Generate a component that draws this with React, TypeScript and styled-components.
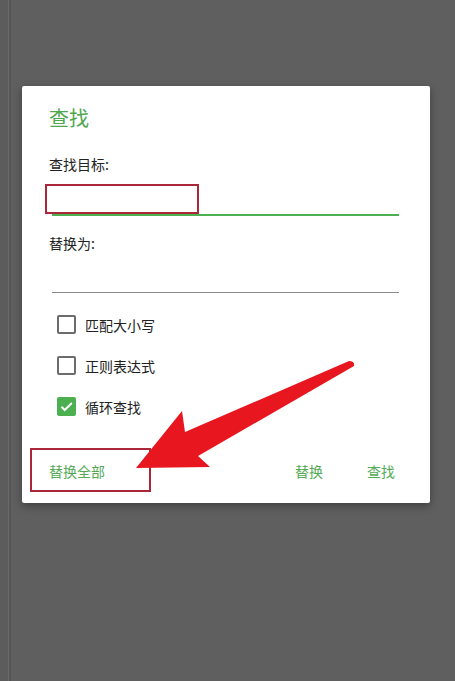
import React, { useState } from 'react'
import styled, { createGlobalStyle } from 'styled-components';

const GlobalStyle = createGlobalStyle`
    html, body {
        margin:0;
        padding:0;
    }
    body {
        background:#5f5f5f;
        font-family:"Noto Sans CJK SC", "Noto Sans", sans-serif;
    }
`;

const Page = styled.div`
    position:relative;
    width:455px;
    height:681px;
    overflow:hidden;
    background:
        linear-gradient(to right, #5c5c5c 0, #5c5c5c 8px, #6a6a6a 8px, #6a6a6a 9px, #565656 9px, #565656 11px, transparent 11px),
        #5f5f5f;
    padding:86px 0 0 22px;
    box-sizing:border-box;
`;

const Dialog = styled.div`
    position:relative;
    width:408px;
    height:417px;
    box-sizing:border-box;
    background:#fff;
    border-radius:2px;
    box-shadow:0 3px 8px rgba(0,0,0,0.35);
    padding:18px 31px 14px 27px;
    display:flex;
    flex-direction:column;
`;

const Title = styled.h2`
    margin:0;
    font-size:20px;
    line-height:28px;
    font-weight:400;
    color:#4fa74f;
`;

const Label = styled.div<{ top: number }>`
    margin-top:${p => p.top}px;
    font-size:14px;
    line-height:20px;
    color:#222;
`;

const Field = styled.input<{ focused?: boolean }>`
    display:block;
    margin-left:3px;
    width:calc(100% - 3px);
    box-sizing:border-box;
    border:none;
    outline:none;
    background:transparent;
    font-size:15px;
    font-family:inherit;
    border-bottom:${p => p.focused ? '2px solid #4caf50' : '1px solid #8a8a8a'};
    height:${p => p.focused ? 42 : 40}px;
`;

const Options = styled.div`
    margin-top:11px;
    display:flex;
    flex-direction:column;
`;

const OptionRow = styled.label`
    display:flex;
    align-items:center;
    height:41px;
    padding-left:8px;
    gap:9px;
    font-size:14px;
    color:#222;
    cursor:pointer;
`;

const Box = styled.span<{ checked: boolean }>`
    width:19px;
    height:19px;
    box-sizing:border-box;
    border-radius:2px;
    border:${p => p.checked ? 'none' : '2px solid #6c6c6c'};
    background:${p => p.checked ? '#4caf50' : '#fff'};
    display:flex;
    align-items:center;
    justify-content:center;
`;

const Actions = styled.div`
    margin-top:26px;
    margin-right:4px;
    height:36px;
    display:flex;
    align-items:center;
`;

const ActionButton = styled.button<{ gap?: number }>`
    border:none;
    background:transparent;
    padding:0;
    margin-left:${p => p.gap ?? 0}px;
    font-family:inherit;
    font-size:14px;
    color:#55a955;
    cursor:pointer;
`;

const Spacer = styled.div`
    flex:1;
`;

const Mark = styled.div<{ x: number; y: number; w: number; h: number }>`
    position:absolute;
    left:${p => p.x}px;
    top:${p => p.y}px;
    width:${p => p.w}px;
    height:${p => p.h}px;
    box-sizing:border-box;
    border:2px solid #a8283a;
    pointer-events:none;
`;

const ArrowLayer = styled.svg`
    position:absolute;
    left:0;
    top:0;
    pointer-events:none;
`;

const options = ['匹配大小写', '正则表达式', '循环查找'];

const App = () => {
    const [checked, setChecked] = useState([false, false, true]);
    const toggle = (i: number) => setChecked(checked.map((c, j) => j === i ? !c : c));
  return (
    <>
    <GlobalStyle />
    <Page>
        <Dialog>
            <Title>查找</Title>
            <Label top={22}>查找目标:</Label>
            <Field focused />
            <Label top={17}>替换为:</Label>
            <Field />
            <Options>
                {options.map((o, i) => (
                    <OptionRow key={o} onClick={() => toggle(i)}>
                        <Box checked={checked[i]}>
                            {checked[i] && (
                                <svg width="15" height="15" viewBox="0 0 24 24">
                                    <path d="M4 12.5l5.2 5.2L20.5 6.5" fill="none" stroke="#fff" strokeWidth="3.2" />
                                </svg>
                            )}
                        </Box>
                        {o}
                    </OptionRow>
                ))}
            </Options>
            <Actions>
                <ActionButton>替换全部</ActionButton>
                <Spacer />
                <ActionButton>替换</ActionButton>
                <ActionButton gap={44}>查找</ActionButton>
            </Actions>
            <Mark x={23} y={98} w={154} h={30} />
            <Mark x={8} y={362} w={121} h={44} />
        </Dialog>
        <ArrowLayer width="455" height="681" viewBox="0 0 455 681">
            <path d="M349 361 Q355 361 354 366 L198 456 L210 467 L136 468 L182 411 L185 432 Z" fill="#e8161f" />
        </ArrowLayer>
    </Page>
    </>
  )
}

export default App
